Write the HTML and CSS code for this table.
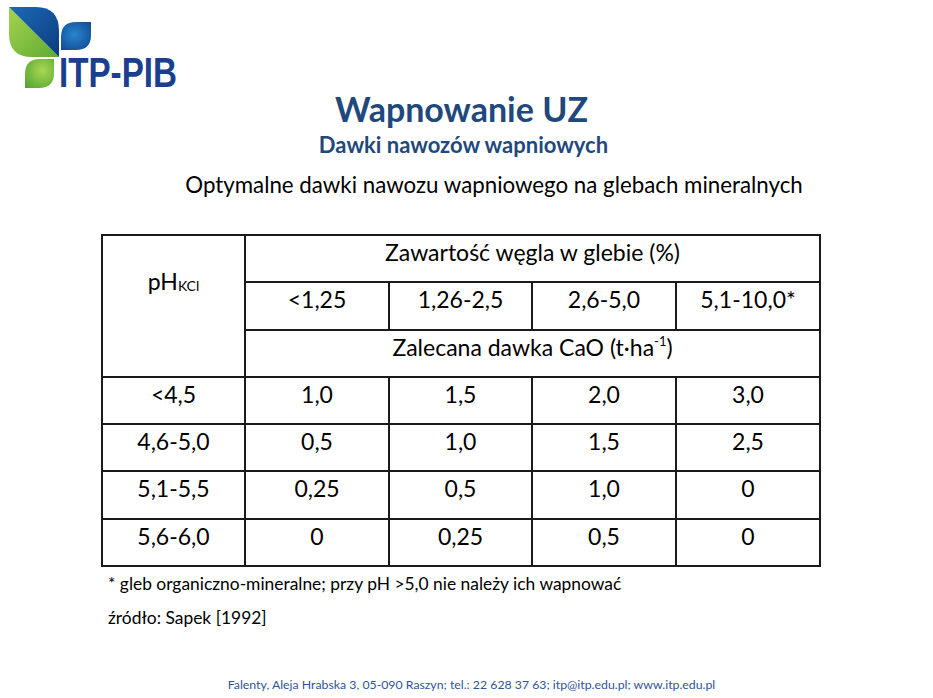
FILE: index.html
```html
<!DOCTYPE html>
<html lang="pl">
<head>
<meta charset="utf-8">
<title>Wapnowanie UZ</title>
<link rel="stylesheet" href="styles.css">
</head>
<body>
<div class="page">
  <header class="logo">
    <svg class="logo-mark" width="100" height="91" viewBox="0 0 100 91" aria-hidden="true">
      <defs>
        <linearGradient id="gBlue" x1="0" y1="0" x2="1" y2="1">
          <stop offset="0" stop-color="#1c6bb8"/>
          <stop offset="1" stop-color="#0c3a7e"/>
        </linearGradient>
        <linearGradient id="gGreen" x1="0" y1="0" x2="1" y2="1">
          <stop offset="0" stop-color="#a6d44e"/>
          <stop offset="1" stop-color="#5eab34"/>
        </linearGradient>
        <radialGradient id="gBlue2" cx="0.45" cy="0.45" r="0.7">
          <stop offset="0" stop-color="#2a84cf"/>
          <stop offset="1" stop-color="#0f4a92"/>
        </radialGradient>
        <radialGradient id="gGreen2" cx="0.6" cy="0.4" r="0.75">
          <stop offset="0" stop-color="#a8d653"/>
          <stop offset="1" stop-color="#57a833"/>
        </radialGradient>
        <clipPath id="bigLeaf">
          <path d="M9,7 L36,7 Q59,7 59,31 L59,57 L32,57 Q9,57 9,34 Z"/>
        </clipPath>
      </defs>
      <g clip-path="url(#bigLeaf)">
        <polygon points="9,7 59,57 9,57" fill="url(#gGreen)"/>
        <polygon points="9,7 59,7 59,57" fill="url(#gBlue)"/>
      </g>
      <path d="M61,50 L61,37 Q61,22 76,22 L91,22 L91,35 Q91,50 76,50 Z" fill="url(#gBlue2)"/>
      <path d="M25,88 L25,74 Q25,59 40,59 L54,59 L54,73 Q54,88 39,88 Z" fill="url(#gGreen2)"/>
    </svg>
    <span class="logo-text">ITP-PIB</span>
  </header>

  <h1 class="title">Wapnowanie UZ</h1>
  <h2 class="subtitle">Dawki nawozów wapniowych</h2>
  <p class="caption">Optymalne dawki nawozu wapniowego na glebach mineralnych</p>

  <table class="doses">
    <colgroup>
      <col class="c1"><col class="c2"><col class="c3"><col class="c4"><col class="c5">
    </colgroup>
    <tr>
      <th rowspan="3" class="ph">pH<sub>KCl</sub></th>
      <th colspan="4">Zawartość węgla w glebie (%)</th>
    </tr>
    <tr>
      <th>&lt;1,25</th><th>1,26-2,5</th><th>2,6-5,0</th><th>5,1-10,0*</th>
    </tr>
    <tr>
      <th colspan="4">Zalecana dawka CaO (t·ha<sup>-1</sup>)</th>
    </tr>
    <tr><td>&lt;4,5</td><td>1,0</td><td>1,5</td><td>2,0</td><td>3,0</td></tr>
    <tr><td>4,6-5,0</td><td>0,5</td><td>1,0</td><td>1,5</td><td>2,5</td></tr>
    <tr><td>5,1-5,5</td><td>0,25</td><td>0,5</td><td>1,0</td><td>0</td></tr>
    <tr><td>5,6-6,0</td><td>0</td><td>0,25</td><td>0,5</td><td>0</td></tr>
  </table>

  <p class="note">* gleb organiczno-mineralne; przy pH &gt;5,0 nie należy ich wapnować</p>
  <p class="note source">źródło: Sapek [1992]</p>

  <footer class="footer">Falenty, Aleja Hrabska 3, 05-090 Raszyn; tel.: 22 628 37 63; itp@itp.edu.pl; www.itp.edu.pl</footer>
</div>
</body>
</html>
```

FILE: styles.css
```css
html, body {
  margin: 0;
  padding: 0;
  background: #ffffff;
}
body {
  font-family: Lato, "Open Sans", "Liberation Sans", sans-serif;
  color: #000;
}
.page {
  width: 933px;
  height: 698px;
  position: relative;
  overflow: hidden;
}
.logo {
  height: 91px;
  position: relative;
}
.logo-mark {
  display: block;
}
.logo-text {
  position: absolute;
  left: 59px;
  top: 49px;
  font-family: "Liberation Sans", Arial, sans-serif;
  font-weight: 700;
  font-size: 42px;
  line-height: 48px;
  color: #1b3f8f;
  white-space: nowrap;
  transform: scaleX(0.79);
  transform-origin: left top;
}
.title {
  margin: 0;
  text-align: center;
  font-size: 34px;
  line-height: 36px;
  font-weight: 700;
  color: #1f497d;
  padding-right: 10px;
}
.subtitle {
  margin: 6px 0 0;
  text-align: center;
  font-size: 22px;
  line-height: 24px;
  font-weight: 700;
  color: #1f497d;
  padding-right: 6px;
}
.caption {
  margin: 13.5px 0 0;
  text-align: center;
  font-size: 22.3px;
  line-height: 28px;
  padding-left: 55px;
}
.doses {
  margin: 35.5px 0 0 101px;
  border-collapse: collapse;
  table-layout: fixed;
  width: 720px;
}
.c1 { width: 143px; }
.c2 { width: 144px; }
.c3 { width: 143px; }
.c4 { width: 144px; }
.c5 { width: 144px; }
.doses th, .doses td {
  border: 2px solid #1a1a1a;
  height: 41.3px;
  padding: 4px 0 0;
  text-align: center;
  vertical-align: top;
  font-weight: 400;
  font-size: 23px;
  line-height: 24px;
}
.doses th.ph {
  padding-top: 33px;
}
.doses sub {
  font-size: 14px;
  vertical-align: baseline;
  position: relative;
  top: 1px;
}
.doses sup {
  font-size: 13px;
  line-height: 0;
  vertical-align: baseline;
  position: relative;
  top: -10px;
}
.note {
  margin: 6px 0 0 108px;
  font-size: 17.4px;
  line-height: 22px;
}
.note.source {
  margin-top: 12px;
}
.footer {
  position: absolute;
  left: 0;
  right: 0;
  top: 677px;
  text-align: center;
  font-size: 12.3px;
  line-height: 16px;
  color: #2f5597;
  padding-left: 10px;
}
```
